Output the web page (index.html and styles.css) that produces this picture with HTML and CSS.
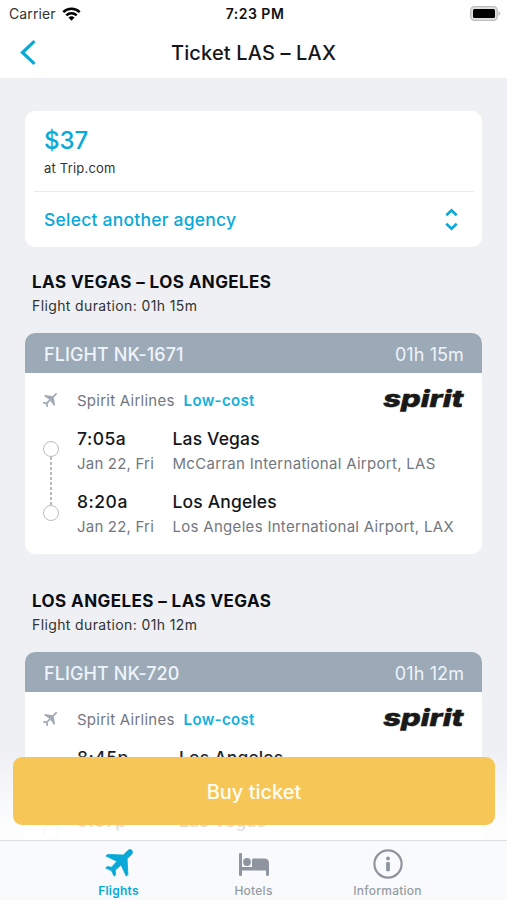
FILE: index.html
```html
<!DOCTYPE html>
<html lang="en">
<head>
<meta charset="utf-8">
<title>Ticket LAS – LAX</title>
<link rel="stylesheet" href="styles.css">
</head>
<body>
<svg class="defs" aria-hidden="true">
  <symbol id="plane" viewBox="0 0 28 28">
    <path d="M26.800 1.200c-1.100-1.100-2.800-.8-4 .4L18.400 6 2.600 5.400.9 7l11 5.300-5.300 5.900-4.500-.6L.7 19.100l5.700 2.500 2.700 5.600 1.600-1.500-.5-4.500 5.800-5.300 5.300 11.300 1.600-1.700-.8-15.700 4.400-4.400c1.100-1.200 1.400-3.100.3-4.200z" fill="currentColor" stroke="currentColor" stroke-width=".8" stroke-linejoin="round"/>
  </symbol>
  <symbol id="plane-thin" viewBox="0 0 14 14">
    <path d="M13.100.9L3.400 10.600M3.700 10.300L.8 9.800M3.700 10.300L4.200 13.200" fill="none" stroke="currentColor" stroke-width="1.700" stroke-linecap="round"/>
    <path d="M10 3.300L2 2 1 3 6.600 6.700zM10.700 4L12 12 11 13 7.300 7.400z" fill="currentColor"/>
  </symbol>
</svg>
<div class="phone">
  <header class="top">
    <div class="status">
      <div class="carrier"><span>Carrier</span>
        <svg width="19" height="14" viewBox="0 0 19 14" fill="none" stroke="#000" stroke-width="2.500"><path d="M1.300 5.100C5.800.7 13.200.7 17.700 5.100M4.300 8.300C7.200 5.600 11.800 5.600 14.700 8.300"/><path d="M6.500 10.600Q9.500 8 12.500 10.600L9.500 13.700Z" fill="#000" stroke="none"/></svg>
      </div>
      <div class="clock">7:23 PM</div>
      <div class="power"><svg width="31" height="15" viewBox="0 0 31 15"><rect x=".7" y=".7" width="26.600" height="13.600" rx="3.800" fill="#e0e0e0" stroke="#bdbdbd" stroke-width="1.300"/><rect x="3" y="3" width="22" height="9" rx="1.500" fill="#000"/><path d="M28.500 5q3.600 2.500 0 5z" fill="#bdbdbd"/></svg></div>
    </div>
    <nav class="nav">
      <svg class="back" width="16" height="25" viewBox="0 0 16 25" fill="none" stroke="#08a9d6" stroke-width="3.200"><path d="M14.500 1.200L2.500 12.500 14.500 23.800"/></svg>
      <h1>Ticket LAS – LAX</h1>
    </nav>
  </header>

  <main class="content">
    <section class="card price-card">
      <div class="price"><strong>$37</strong><span>at Trip.com</span></div>
      <div class="agency"><span>Select another agency</span>
        <svg width="13" height="23" viewBox="0 0 13 23" fill="none" stroke="#08a9d6" stroke-width="2.600"><path d="M1.300 7.200L6.500 2.200l5.200 5M1.300 15.800l5.200 5 5.200-5"/></svg>
      </div>
    </section>

    <section class="leg">
      <h2>LAS VEGAS – LOS ANGELES</h2>
      <p class="duration">Flight duration: 01h 15m</p>
      <article class="card flight">
        <div class="bar"><span class="number">FLIGHT NK-1671</span><span class="total">01h 15m</span></div>
        <div class="airline"><svg class="mini"><use href="#plane-thin"/></svg><span class="name">Spirit Airlines</span><span class="low">Low-cost</span><span class="logo">spirit</span></div>
        <div class="route">
          <div class="track"><i></i><b></b><i></i></div>
          <div class="stops">
            <div class="stop"><div class="when"><strong>7:05a</strong><span>Jan 22, Fri</span></div><div class="where"><strong>Las Vegas</strong><span>McCarran International Airport, LAS</span></div></div>
            <div class="stop"><div class="when"><strong>8:20a</strong><span>Jan 22, Fri</span></div><div class="where"><strong>Los Angeles</strong><span>Los Angeles International Airport, LAX</span></div></div>
          </div>
        </div>
      </article>
    </section>

    <section class="leg">
      <h2>LOS ANGELES – LAS VEGAS</h2>
      <p class="duration">Flight duration: 01h 12m</p>
      <article class="card flight">
        <div class="bar"><span class="number">FLIGHT NK-720</span><span class="total">01h 12m</span></div>
        <div class="airline"><svg class="mini"><use href="#plane-thin"/></svg><span class="name">Spirit Airlines</span><span class="low">Low-cost</span><span class="logo">spirit</span></div>
        <div class="route return">
          <div class="track"><i></i><b></b><i></i></div>
          <div class="stops">
            <div class="stop"><div class="when"><strong>8:45p</strong><span>Jan 25, Mon</span></div><div class="where"><strong>Los Angeles</strong></div></div>
            <div class="stop"><div class="when"><strong>9:57p</strong></div><div class="where"><strong>Las Vegas</strong></div></div>
          </div>
        </div>
      </article>
    </section>
    <div class="buy-area"><button class="buy">Buy ticket</button></div>
  </main>

  <footer class="tabs">
    <a class="tab active"><svg width="28" height="28"><use href="#plane" width="28" height="28"/></svg><span>Flights</span></a>
    <a class="tab"><svg width="32" height="28" viewBox="0 0 32 28" fill="#8e959e"><rect x="1" y="3" width="3" height="23" rx="1.300"/><path d="M3 17h11V10Q14 8.500 15.500 8.500H26Q31 8.500 31 13V24.500Q31 26 29.500 26T28 24.500V20.500H3z"/><circle cx="9" cy="12" r="3.900"/></svg><span>Hotels</span></a>
    <a class="tab"><svg width="30" height="30" viewBox="0 0 30 30" fill="#8e959e"><circle cx="15" cy="15" r="13.600" fill="none" stroke="#8e959e" stroke-width="2.200"/><circle cx="15" cy="9.500" r="1.900"/><rect x="13.100" y="13" width="3.800" height="9.200" rx="1"/></svg><span>Information</span></a>
  </footer>
</div>
</body>
</html>
```
FILE: styles.css
```css
* { box-sizing: border-box; }
body { margin: 0; font-family: Inter, "Liberation Sans", sans-serif; color: #15171b; }
h1, h2, p { margin: 0; }
.defs { display: none; }
svg { display: block; flex: none; }
.phone { width: 507px; height: 900px; overflow: hidden; display: flex; flex-direction: column; background: #eef0f4; }

.top { height: 78px; flex: none; background: #fff; }
.status { height: 27px; display: grid; grid-template-columns: 1fr auto 1fr; align-items: center; padding: 0 6px 0 9px; }
.carrier { display: flex; align-items: center; gap: 6px; font-size: 14px; color: #333; letter-spacing: .1px; }
.clock { font-size: 14px; font-weight: 600; letter-spacing: .5px; color: #111; }
.power { justify-self: end; }
.nav { height: 51px; display: grid; grid-template-columns: 40px 1fr 40px; align-items: center; padding: 0 20px; }
.nav h1 { font-size: 20px; line-height: 24px; font-weight: 500; text-align: center; letter-spacing: .15px; }

.content { position: relative; height: 762px; flex: none; overflow: hidden; padding: 33px 25px 0; }
.card { background: #fff; border-radius: 10px; overflow: hidden; }
.price-card { height: 136px; }
.price { height: 81px; margin: 0 8px 0 9px; padding: 15px 0 0 10px; border-bottom: 1px solid #e9ebed; display: flex; flex-direction: column; }
.price strong { font-size: 24px; line-height: 30px; font-weight: 500; color: #08a9d6; }
.price span { font-size: 13px; line-height: 16px; margin-top: 4px; color: #333; letter-spacing: .2px; }
.agency { height: 55px; padding: 0 24px 0 19px; display: flex; align-items: center; justify-content: space-between; color: #08a9d6; font-size: 17.500px; font-weight: 500; letter-spacing: .22px; }

.leg { height: 319px; padding-top: 24px; }
.leg h2 { margin-left: 7px; font-size: 17px; line-height: 22px; font-weight: 700; letter-spacing: .42px; color: #0c0e12; }
.duration { margin: 4px 0 18px 7px; font-size: 14px; line-height: 18px; color: #333; letter-spacing: .38px; }
.flight { height: 221px; }
.bar { height: 40px; padding: 2px 18px 0 19px; background: #9ca9b7; color: #eef4fb; display: flex; justify-content: space-between; align-items: center; font-size: 18px; letter-spacing: .1px; }
.number { font-weight: 500; }
.airline { height: 53px; padding: 1px 18px 0; display: flex; align-items: center; font-size: 15px; color: #737780; letter-spacing: .25px; }
.mini { width: 14px; height: 14px; margin-right: 20px; color: #a1a8b6; }
.low { margin-left: 9px; font-weight: 600; color: #10b0dc; letter-spacing: .35px; }
.logo { margin: -3px 1px 0 auto; font-size: 23px; line-height: 30px; font-weight: 800; font-style: italic; letter-spacing: 0; color: #191919; -webkit-text-stroke: .5px #191919; transform: scaleX(1.350); transform-origin: right center; }
.route { display: flex; padding: 1px 18px 0; }
.track { width: 34px; padding-top: 14px; display: flex; flex-direction: column; }
.track i { width: 16px; height: 16px; border: 1.500px solid #b9bdc4; border-radius: 50%; }
.track b { width: 1.500px; height: 48px; margin-left: 7px; background: repeating-linear-gradient(#b5b9c0 0 3px, transparent 3px 5px); }
.stop { height: 63px; display: flex; }
.when { width: 95.500px; }
.return .when { width: 102px; }
.stop strong, .stop span { display: block; white-space: nowrap; }
.stop strong { font-size: 17.500px; line-height: 24px; font-weight: 500; letter-spacing: .15px; }
.when strong { letter-spacing: .5px; }
.stop span { margin-top: 3px; font-size: 15px; line-height: 20px; color: #737780; letter-spacing: .3px; }
.when span { letter-spacing: .2px; }

.buy-area { position: absolute; left: 0; right: 0; bottom: 0; height: 100px; padding: 17px 12px 0 13px; background: linear-gradient(rgba(255,255,255,0) 10px, rgba(255,255,255,.8) 78px, rgba(255,255,255,.92)); }
.buy { display: block; width: 100%; height: 68px; border: 0; border-radius: 9px; background: #f6c657; color: #fffdf5; font: 500 20px Inter, sans-serif; padding: 2px 0 0; }

.tabs { height: 60px; flex: none; border-top: 1px solid #dcdfe1; background: #f9fafb; display: grid; grid-template-columns: 134px 134px 134px; justify-content: center; }
.tab { display: flex; flex-direction: column; align-items: center; padding-top: 8px; color: #979da4; font-size: 12px; letter-spacing: .25px; }
.tab svg { height: 30px; }
.tab span { line-height: 16px; margin-top: 4px; font-weight: 500; }
.active { color: #08a9d6; }
.active svg { margin-right: 1px; }
.active span { font-weight: 600; margin-right: 2px; }
```
